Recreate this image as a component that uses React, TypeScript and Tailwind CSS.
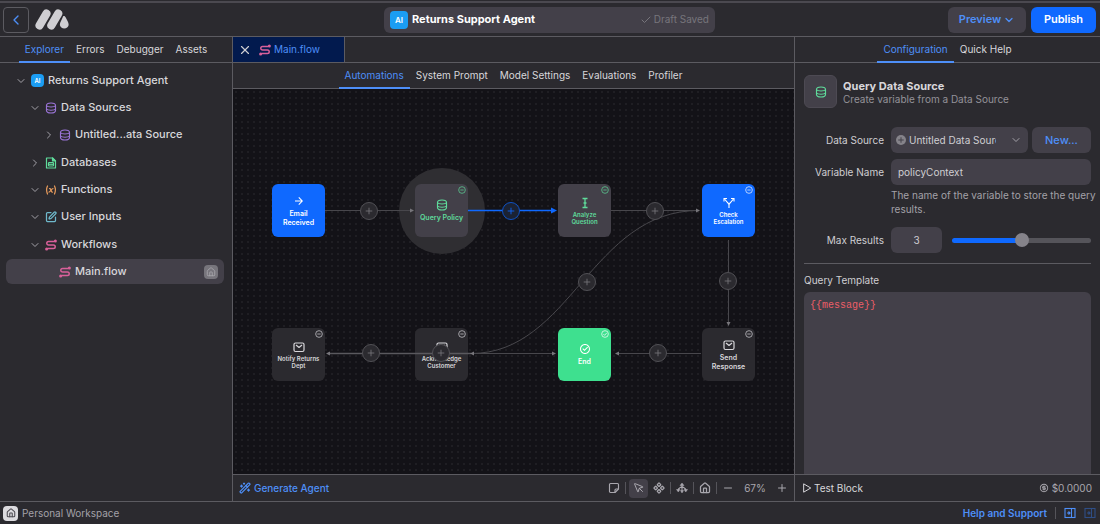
import { useState } from 'react'
import type { ReactNode } from 'react'
import { RiCheckboxCircleLine, RiMoneyDollarCircleLine, RiArrowRightLine } from 'react-icons/ri'
import { TbVariable } from 'react-icons/tb'
import {
    Check,
    ChevronDown,
    ChevronLeft,
    ChevronRight,
    Component,
    House,
    Minus,
    MousePointer,
    Plus,
    SquarePen,
    WandSparkles,
    X,
} from 'lucide-react'

const Logo = () => (
    <svg viewBox="104 26 104 64" className="h-[21px] w-[34px]" aria-hidden="true">
        <g stroke="#cfced2" strokeWidth="25" strokeLinecap="round">
            <path d="M118 76 L139 40" />
            <path d="M154 76 L175 40" />
        </g>
        <path d="M190 48 C193 46 196 47 198 52 C202 60 207 67 207 75 A14 14 0 0 1 180 75 C180 66 187 57 190 48Z" fill="#cfced2" />
    </svg>
)

const FlowIcon = ({ className = '' }: { className?: string }) => (
    <svg viewBox="1 1 22 22" fill="none" stroke="currentColor" strokeWidth="2.7" strokeLinecap="round" className={`text-[#d9609a] ${className}`} aria-hidden="true">
        <path d="M17 5.500H7.500a3.250 3.250 0 0 0 0 6.500h9a3.250 3.250 0 0 1 0 6.500H6" />
        <circle cx="20" cy="4.500" r="2.800" fill="currentColor" stroke="none" />
        <circle cx="4" cy="19.500" r="2.800" fill="currentColor" stroke="none" />
    </svg>
)

const DatabaseIcon = ({ className = 'size-3' }: { className?: string }) => (
    <svg viewBox="0 0 24 24" fill="none" stroke="currentColor" strokeWidth="2.3" className={className} aria-hidden="true">
        <path d="M3 7c0-3 3-5 9-5s9 2 9 5v10c0 3-3 5-9 5s-9-2-9-5z" />
        <path d="M3 7.500c1.500 2 5 2.500 9 2.500s7.500-.5 9-2.500M3 14c1.500 2 5 2.500 9 2.500s7.500-.5 9-2.500" />
    </svg>
)

const FileDataIcon = () => (
    <svg viewBox="0 0 24 24" className="size-3 text-[#5fdb9b]" fill="none" stroke="currentColor" strokeWidth="2.4" strokeLinejoin="round" aria-hidden="true">
        <path d="M3 2h12l6 6v14H3z" />
        <path d="M15 2v6h6z" fill="currentColor" />
        <rect x="7" y="11" width="10" height="7" rx="1.5" />
        <path d="M7 14.5h10" />
    </svg>
)

const MailIcon = () => (
    <svg viewBox="0 0 24 24" className="size-3" fill="none" stroke="currentColor" strokeWidth="2.4" strokeLinejoin="round" aria-hidden="true">
        <rect x="2" y="4" width="20" height="17" rx="3" />
        <path d="M6 8l6 5 6-5" />
    </svg>
)

const ForkIcon = () => (
    <svg viewBox="0 0 24 24" className="size-3" fill="none" stroke="currentColor" strokeWidth="2.2" aria-hidden="true">
        <path d="M12 22v-6c0-2-1-3-2-4L3 4M12 16c0-2 1-3 2-4l7-8" />
        <path d="M2 9V3h6M16 3h6v6" />
    </svg>
)

const TextCursorIcon = () => (
    <svg viewBox="0 0 24 24" className="size-3" fill="none" stroke="currentColor" strokeWidth="2.6" aria-hidden="true">
        <path d="M7 3h10M7 21h10M12 3v18M9 12h6" />
    </svg>
)

const NoteIcon = () => (
    <svg viewBox="0 0 24 24" className="size-3" fill="none" stroke="currentColor" strokeWidth="2.3" strokeLinejoin="round" aria-hidden="true">
        <path d="M5 3h14a2 2 0 0 1 2 2v9l-7 7H5a2 2 0 0 1-2-2V5a2 2 0 0 1 2-2z" />
        <path d="M14 21v-5a2 2 0 0 1 2-2h5" />
    </svg>
)

const TreeLayoutIcon = () => (
    <svg viewBox="0 0 24 24" className="size-3" fill="none" stroke="currentColor" strokeWidth="2.2" aria-hidden="true">
        <path d="M12 5v13M4 17c0-5 4-5 8-8 4 3 8 3 8 8" />
        <path d="M8 7l4-5 4 5zM1 15h7l-3.500 5zM16 15h7l-3.500 5zM9 17h6l-3 5z" fill="currentColor" strokeWidth="1" />
    </svg>
)

const PanelIcon = () => (
    <svg viewBox="0 0 24 24" className="size-3" fill="none" stroke="currentColor" strokeWidth="2.2" aria-hidden="true">
        <rect x="2" y="3" width="20" height="18" />
        <path d="M15 3v18M6 12h5M9 9l3 3-3 3" />
    </svg>
)

const StatusIcon = ({ done = false }: { done?: boolean }) => (
    <svg viewBox="0 0 24 24" className="size-2" fill="none" stroke="currentColor" strokeWidth="2.6" aria-hidden="true">
        <circle cx="12" cy="12" r="10" />
        <path d={done ? 'M7 12l4 4 6-7' : 'M7 12h10'} />
    </svg>
)

const AiBadge = ({ className = '' }: { className?: string }) => (
    <span className={`flex shrink-0 items-center justify-center bg-[#1b9df3] font-semibold text-white ${className}`}>AI</span>
)

const Tabs = ({ items, label }: { items: string[]; label: string }) => {
    const [active, setActive] = useState(items[0])
    return (
        <nav aria-label={label} className="flex h-[26px] shrink-0 justify-center border-b border-[#5c5b61]">
            {items.map((item) => (
                <button
                    key={item}
                    onClick={() => setActive(item)}
                    className={`-mb-px border-b-2 px-1.5 text-[10px] ${
                        item === active ? 'border-[#4e8ff8] text-[#4e8ff8]' : 'border-transparent text-[#d8d7db]'
                    }`}
                >
                    {item}
                </button>
            ))}
        </nav>
    )
}

type TreeRowProps = {
    icon: ReactNode
    label: string
    indent: string
    open?: boolean
    leaf?: boolean
}

const TreeRow = ({ icon, label, indent, open = true, leaf = false }: TreeRowProps) => (
    <button
        className={`my-px flex h-[25px] w-full items-center rounded-md text-left text-[11px] font-medium text-[#d8d7db] ${indent} ${
            leaf ? 'bg-[#434049]' : ''
        }`}
    >
        <span className="mr-1 w-3 shrink-0 text-[#a3a1a8]">
            {!leaf && (open ? <ChevronDown className="size-3" /> : <ChevronRight className="size-3" />)}
        </span>
        <span className="mr-1 flex shrink-0">{icon}</span>
        <span className="flex-1">{label}</span>
        {leaf && (
            <span className="mr-1.5 flex size-3.5 items-center justify-center rounded-sm bg-[#77757c] text-[#aaa8ae]">
                <House className="size-2.5" />
            </span>
        )}
    </button>
)

const Sidebar = () => (
    <aside className="flex w-[233px] shrink-0 flex-col border-r border-[#5c5b61]">
        <Tabs label="Sidebar" items={['Explorer', 'Errors', 'Debugger', 'Assets']} />
        <div className="flex flex-col py-1 pr-2 pl-1.5">
            <TreeRow indent="pl-[9px]" icon={<AiBadge className="size-[13px] rounded-sm text-[6px]" />} label="Returns Support Agent" />
            <div className="mb-px flex flex-col">
                <TreeRow indent="pl-[23px]" icon={<DatabaseIcon className="size-3 text-[#9a74d6]" />} label="Data Sources" />
                <TreeRow indent="pl-[37px]" open={false} icon={<DatabaseIcon className="size-3 text-[#9a74d6]" />} label="Untitled...ata Source" />
            </div>
            <TreeRow indent="pl-[23px]" open={false} icon={<FileDataIcon />} label="Databases" />
            <TreeRow indent="pl-[23px]" icon={<TbVariable className="size-3 text-[#e59a5c]" strokeWidth={2.5} />} label="Functions" />
            <TreeRow indent="pl-[23px]" icon={<SquarePen className="size-3 text-[#6fb9cc]" strokeWidth={2.5} />} label="User Inputs" />
            <div className="mt-px flex flex-col">
                <TreeRow indent="pl-[23px]" icon={<FlowIcon className="size-3" />} label="Workflows" />
                <TreeRow indent="pl-[37px]" leaf icon={<FlowIcon className="size-3" />} label="Main.flow" />
            </div>
        </div>
    </aside>
)

const tones = {
    blue: 'bg-[#0f69ff] text-white',
    green: 'bg-[#3ee08f] text-white',
    muted: 'bg-[#434049] text-[#5fdb9b]',
    dark: 'bg-[#2b2a2f] text-[#d8d7db]',
}

type FlowNode = {
    lines: string[]
    tone: keyof typeof tones
    icon: ReactNode
    place: string
    small?: boolean
    status?: ReactNode
}

const nodes: FlowNode[] = [
    { lines: ['Email', 'Received'], tone: 'blue', icon: <RiArrowRightLine className="size-3" />, place: 'left-[39px] top-[95px]' },
    { lines: ['Query Policy'], tone: 'muted', icon: <DatabaseIcon />, place: 'left-[182px] top-[95px]', status: <StatusIcon /> },
    { lines: ['Analyze', 'Question'], tone: 'muted', icon: <TextCursorIcon />, place: 'left-[325px] top-[95px]', small: true, status: <StatusIcon /> },
    { lines: ['Check', 'Escalation'], tone: 'blue', icon: <ForkIcon />, place: 'left-[469px] top-[95px]', small: true, status: <StatusIcon /> },
    { lines: ['Notify Returns', 'Dept'], tone: 'dark', icon: <MailIcon />, place: 'left-[39px] top-[239px]', small: true, status: <StatusIcon /> },
    { lines: ['Acknowledge', 'Customer'], tone: 'dark', icon: <MailIcon />, place: 'left-[182px] top-[239px]', small: true, status: <StatusIcon /> },
    { lines: ['End'], tone: 'green', icon: <RiCheckboxCircleLine className="size-3" />, place: 'left-[325px] top-[239px]', status: <StatusIcon done /> },
    { lines: ['Send', 'Response'], tone: 'dark', icon: <MailIcon />, place: 'left-[469px] top-[239px]', status: <StatusIcon /> },
]

const addPoints = [
    'left-[127px] top-[113px]',
    'left-[413px] top-[113px]',
    'left-[345px] top-[184px]',
    'left-[486px] top-[183px]',
    'left-[129px] top-[255px]',
    'left-[199px] top-[255px]',
    'left-[416px] top-[255px]',
]

const Edges = () => (
    <svg className="pointer-events-none absolute top-0 left-0 h-[386px] w-[561px]" fill="none" aria-hidden="true">
        <g stroke="#48474c">
            <path d="M92 121.500H180" />
            <path d="M378 121.500H466" />
            <path d="M495.500 151V236" />
            <path d="M238 264.500C338 264.500 358 121.500 466 121.500" />
            <path d="M238 264.500H322M383 264.500H468" />
        </g>
        <path d="M95 264.500H238" stroke="#5a595e" strokeWidth="1.500" />
        <path d="M235 121.500H320" stroke="#0f69ff" strokeWidth="1.500" />
        <path d="M318 118.500l6 3-6 3z" fill="#0f69ff" />
        <g fill="#77767b">
            <path d="M177 119.500l4 2-4 2zM463 119.500l4 2-4 2zM493.500 233l2 4 2-4z" />
            <path d="M97 262.500l-4 2 4 2zM241 262.500l-4 2 4 2zM319 262.500l4 2-4 2zM386 262.500l-4 2 4 2z" />
        </g>
    </svg>
)

const AddButton = ({ className }: { className: string }) => (
    <button aria-label="Add step" className={`absolute flex size-[18px] items-center justify-center rounded-full border ${className}`}>
        <Plus className="size-2.5" />
    </button>
)

const Canvas = () => (
    <div className="relative min-h-0 flex-1 overflow-hidden bg-[#131217] bg-[radial-gradient(circle,#1f1e23_1px,transparent_1px)] bg-size-[6px_6px]">
        <div className="absolute top-[79px] left-[166px] size-[86px] rounded-full bg-[#2f2e32]" />
        {nodes.map((node) => (
            <button
                key={node.lines.join(' ')}
                className={`absolute flex size-[53px] flex-col items-center justify-center gap-0.5 rounded-md font-semibold ${node.place} ${tones[node.tone]} ${
                    node.small ? 'text-[6px] leading-[7px]' : 'text-[7px] leading-[9px]'
                }`}
            >
                {node.icon}
                <span className="whitespace-nowrap">
                    {node.lines.map((line) => (
                        <span key={line} className="block">{line}</span>
                    ))}
                </span>
                {node.status && <span className="absolute top-0.5 right-0.5 opacity-80">{node.status}</span>}
            </button>
        ))}
        <Edges />
        {addPoints.map((point) => (
            <AddButton key={point} className={`border-[#515055] bg-[#2b2a2f] text-[#77767b] ${point}`} />
        ))}
        <AddButton className="top-[113px] left-[269px] border-[#0f52c4] bg-[#1b2233] text-[#0f69ff]" />
    </div>
)

const Divider = () => <span className="h-3 w-px bg-[#55545a]" />

const CanvasToolbar = () => (
    <div className="flex h-[27px] shrink-0 items-center justify-between border-t border-[#5c5b61] px-1.5">
        <button className="flex items-center gap-[3px] text-[10px] font-medium text-[#4e8ff8]">
            <WandSparkles className="size-3" strokeWidth={2.5} />
            Generate Agent
        </button>
        <div className="flex items-center gap-[5px] text-[#a9a7ae]">
            <button aria-label="Add note"><NoteIcon /></button>
            <Divider />
            <div className="flex items-center gap-[5px]">
                <button aria-label="Select" className="-ml-0.5 flex size-[19px] items-center justify-center rounded-sm bg-[#434049]">
                    <MousePointer className="size-3" />
                </button>
                <button aria-label="Pan"><Component className="size-3" strokeWidth={2.5} /></button>
            </div>
            <Divider />
            <button aria-label="Arrange"><TreeLayoutIcon /></button>
            <Divider />
            <button aria-label="Home"><House className="size-3" strokeWidth={2.5} /></button>
            <Divider />
            <button aria-label="Zoom out"><Minus className="size-3" /></button>
            <span className="w-8 text-center text-[10px]">67%</span>
            <button aria-label="Zoom in"><Plus className="size-3" /></button>
        </div>
    </div>
)

const ConfigPanel = () => {
    const [maxResults, setMaxResults] = useState(3)
    const fill = `${((maxResults - 1) / 4) * 100}%`

    return (
        <aside className="flex w-[306px] shrink-0 flex-col border-l border-[#5c5b61]">
            <Tabs label="Panel" items={['Configuration', 'Quick Help']} />
            <div className="flex min-h-0 flex-1 flex-col pt-3 pr-[9px] pl-[9px] text-[10px] text-[#cfced2]">
                <div className="mb-[19px] flex items-center gap-1.5">
                    <span className="flex size-[33px] items-center justify-center rounded-md border border-[#4d4a53] bg-[#434049] text-[#5fdb9b]">
                        <DatabaseIcon className="size-3" />
                    </span>
                    <div>
                        <h2 className="text-[11px] leading-[14px] font-bold text-[#d8d7db]">Query Data Source</h2>
                        <p className="leading-3 text-[#949299]">Create variable from a Data Source</p>
                    </div>
                </div>

                <div className="grid grid-cols-[80px_1fr] items-center gap-x-[7px]">
                    <label htmlFor="source" className="text-right">Data Source</label>
                    <div className="flex gap-1">
                        <div className="relative min-w-0 flex-1">
                            <span className="absolute top-2 left-[5px] flex size-2.5 items-center justify-center rounded-full bg-[#85838a] text-[#434049]">
                                <Plus className="size-2" strokeWidth={3} />
                            </span>
                            <select id="source" className="h-[26px] w-full appearance-none rounded-md bg-[#434049] pr-8 pl-[18px]">
                                <option>Untitled Data Source</option>
                            </select>
                            <ChevronDown className="pointer-events-none absolute top-[7px] right-1.5 size-3 text-[#a3a1a8]" />
                        </div>
                        <button className="h-[26px] w-[59px] rounded-md bg-[#434049] text-[11px] font-medium text-[#4e8ff8]">New...</button>
                    </div>

                    <label htmlFor="variable" className="mt-1.5 text-right">Variable Name</label>
                    <input id="variable" defaultValue="policyContext" className="mt-1.5 h-[26px] w-full min-w-0 rounded-md bg-[#434049] px-[7px]" />

                    <p className="col-start-2 mt-[3px] -mr-[9px] leading-[14px] text-[#a3a1a8]">
                        The name of the variable to store the query results.
                    </p>

                    <label htmlFor="max" className="mt-[11px] text-right">Max Results</label>
                    <div className="mt-[11px] flex items-center gap-2.5">
                        <input id="max" readOnly value={maxResults} className="h-[26px] w-[51px] rounded-md bg-[#434049] text-center" />
                        <input
                            type="range"
                            aria-label="Max results slider"
                            min={1}
                            max={5}
                            value={maxResults}
                            onChange={(e) => setMaxResults(Number(e.target.value))}
                            className="h-[5px] min-w-0 flex-1 appearance-none rounded-full [&::-webkit-slider-thumb]:size-3.5 [&::-webkit-slider-thumb]:appearance-none [&::-webkit-slider-thumb]:rounded-full [&::-webkit-slider-thumb]:bg-[#85838a]"
                            style={{ background: `linear-gradient(to right, #0f69ff ${fill}, #55545a ${fill})` }}
                        />
                    </div>
                </div>

                <hr className="mt-2.5 mb-[9px] border-[#5c5b61]" />
                <label htmlFor="template" className="mb-1">Query Template</label>
                <textarea
                    id="template"
                    defaultValue="{{message}}"
                    className="min-h-0 flex-1 resize-none rounded-t-md bg-[#434049] px-1.5 py-1.5 font-['Liberation_Mono',monospace] text-[10px] text-[#ec5e68]"
                />
            </div>
            <div className="flex h-[27px] shrink-0 items-center justify-between border-t border-[#5c5b61] pr-2 pl-[7px] text-[#d8d7db]">
                <button className="flex items-center gap-0.5 text-[10px]">
                    <svg viewBox="0 0 24 24" className="size-2.5" fill="none" stroke="currentColor" strokeWidth="2.4" strokeLinejoin="round" aria-hidden="true">
                        <path d="M4 2l17 10L4 22z" />
                    </svg>
                    Test Block
                </button>
                <span className="flex items-center gap-[3px] text-[10px] text-[#a9a7ae]">
                    <RiMoneyDollarCircleLine className="size-2.5" />
                    $0.0000
                </span>
            </div>
        </aside>
    )
}

const App = () => {
    return (
        <div className="flex h-screen flex-col overflow-hidden bg-[#2b2a2f] font-['Inter',sans-serif] text-[#cfced2]">
            <header className="mt-px flex h-9 shrink-0 items-center border-t-2 border-b border-t-[#4b4950] border-b-[#5c5b61] pr-1 pl-[3px]">
                <div className="flex flex-1 items-center gap-[6px]">
                    <button aria-label="Back" className="flex size-[26px] items-center justify-center rounded-sm border border-[#5c5b61] text-[#4e8ff8]">
                        <ChevronLeft className="size-4" />
                    </button>
                    <Logo />
                </div>
                <div className="flex h-[26px] w-[331px] items-center rounded-md bg-[#434049] px-1.5">
                    <AiBadge className="mr-1 size-[18px] rounded-sm text-[8px]" />
                    <h1 className="flex-1 text-[11px] font-bold text-white">Returns Support Agent</h1>
                    <span className="flex items-center gap-0.5 text-[10px] text-[#77757c]">
                        <Check className="size-3" />
                        Draft Saved
                    </span>
                </div>
                <div className="flex flex-1 justify-end gap-[5px] text-[11px] font-semibold">
                    <button className="flex h-[26px] w-[78px] items-center justify-center gap-0.5 rounded-md bg-[#434049] text-[#4e8ff8]">
                        Preview
                        <ChevronDown className="size-3" strokeWidth={2.5} />
                    </button>
                    <button className="h-[26px] w-[65px] rounded-md bg-[#0f69ff] text-white">Publish</button>
                </div>
            </header>

            <div className="flex min-h-0 flex-1">
                <Sidebar />
                <main className="flex min-w-0 flex-1 flex-col">
                    <div className="flex h-[26px] shrink-0 border-b border-[#5c5b61]">
                        <div className="flex w-[112px] items-center border-r border-[#5c5b61] bg-[#021a4e] pl-[5px]">
                            <button aria-label="Close tab"><X className="size-3.5" /></button>
                            <FlowIcon className="mr-[3px] ml-[7px] size-3" />
                            <span className="text-[10px] text-[#4e8ff8]">Main.flow</span>
                        </div>
                    </div>
                    <Tabs label="Agent" items={['Automations', 'System Prompt', 'Model Settings', 'Evaluations', 'Profiler']} />
                    <Canvas />
                    <CanvasToolbar />
                </main>
                <ConfigPanel />
            </div>

            <footer className="flex h-[23px] shrink-0 items-center gap-2 border-t border-[#5c5b61] pr-1 pl-[3px] text-[10px]">
                <span className="flex size-[15px] items-center justify-center rounded-sm bg-[#dcdbdf] text-[#4b4950]">
                    <House className="size-2.5" strokeWidth={2.5} />
                </span>
                <span className="-ml-1 flex-1 text-[#a3a1a8]">Personal Workspace</span>
                <a href="#help" className="font-semibold text-[#4e8ff8]">Help and Support</a>
                <Divider />
                <button aria-label="Toggle left panel" className="text-[#4e8ff8]"><PanelIcon /></button>
                <button aria-label="Toggle right panel" className="text-[#2f4e86]"><PanelIcon /></button>
            </footer>
        </div>
    )
}

export default App
